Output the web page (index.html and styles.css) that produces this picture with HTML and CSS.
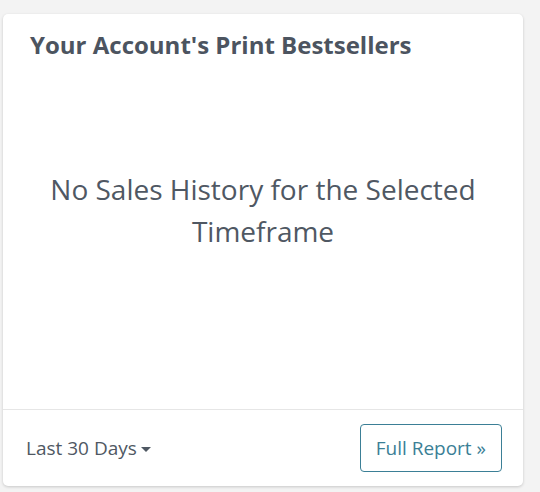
FILE: index.html
```html
<!DOCTYPE html>
<html>
<head>
    <title>Print Bestsellers</title>
    <link rel="stylesheet" href="styles.css">
</head>
<body>

<div class="card">
  <div class="card-header">
    <h3 class="card-title">Your Account's Print Bestsellers</h3>
  </div>
  <div class="card-body">
    <p class="empty-msg">No Sales History for the Selected Timeframe</p>
  </div>
  <div class="card-footer">
    <a class="range-toggle" href="#">Last 30 Days <span class="caret"></span></a>
    <a class="btn-report" href="#">Full Report &raquo;</a>
  </div>
</div>

</body>
</html>
```

FILE: styles.css
```css
body {
    margin: 0;
    padding: 14px 17px 6px 3px;
    background-color: #f3f3f3;
    font-family: "Open Sans", "Liberation Sans", sans-serif;
    color: #4a525d;
}
.card {
    width: 520px;
    height: 472px;
    background-color: #fff;
    border-radius: 5px;
    box-shadow: 0 1px 3px rgba(0, 0, 0, .18);
    display: flex;
    flex-direction: column;
}
.card-header {
    padding: 16px 27px 0;
}
.card-title {
    margin: 0;
    font-size: 24px;
    line-height: 30px;
    font-weight: 700;
    color: #4c5460;
}
.card-body {
    flex: 1;
    padding: 0 30px;
}
.empty-msg {
    margin: 108px 0 0;
    text-align: center;
    font-size: 28px;
    line-height: 42px;
    color: #4f5863;
}
.card-footer {
    border-top: 1px solid #e6e6e6;
    padding: 14px 21px 14px 23px;
    display: flex;
    align-items: center;
    justify-content: space-between;
}
.range-toggle {
    font-size: 19px;
    color: #4f5863;
    text-decoration: none;
}
.caret {
    display: inline-block;
    width: 0;
    height: 0;
    margin-left: -1px;
    vertical-align: middle;
    border-top: 5px solid #4f5863;
    border-left: 5px solid transparent;
    border-right: 5px solid transparent;
}
.btn-report {
    display: inline-block;
    padding: 11px 15px;
    font-size: 19px;
    line-height: 24px;
    color: #3b7f96;
    text-decoration: none;
    border: 1px solid #3b7f96;
    border-radius: 4px;
}
```
